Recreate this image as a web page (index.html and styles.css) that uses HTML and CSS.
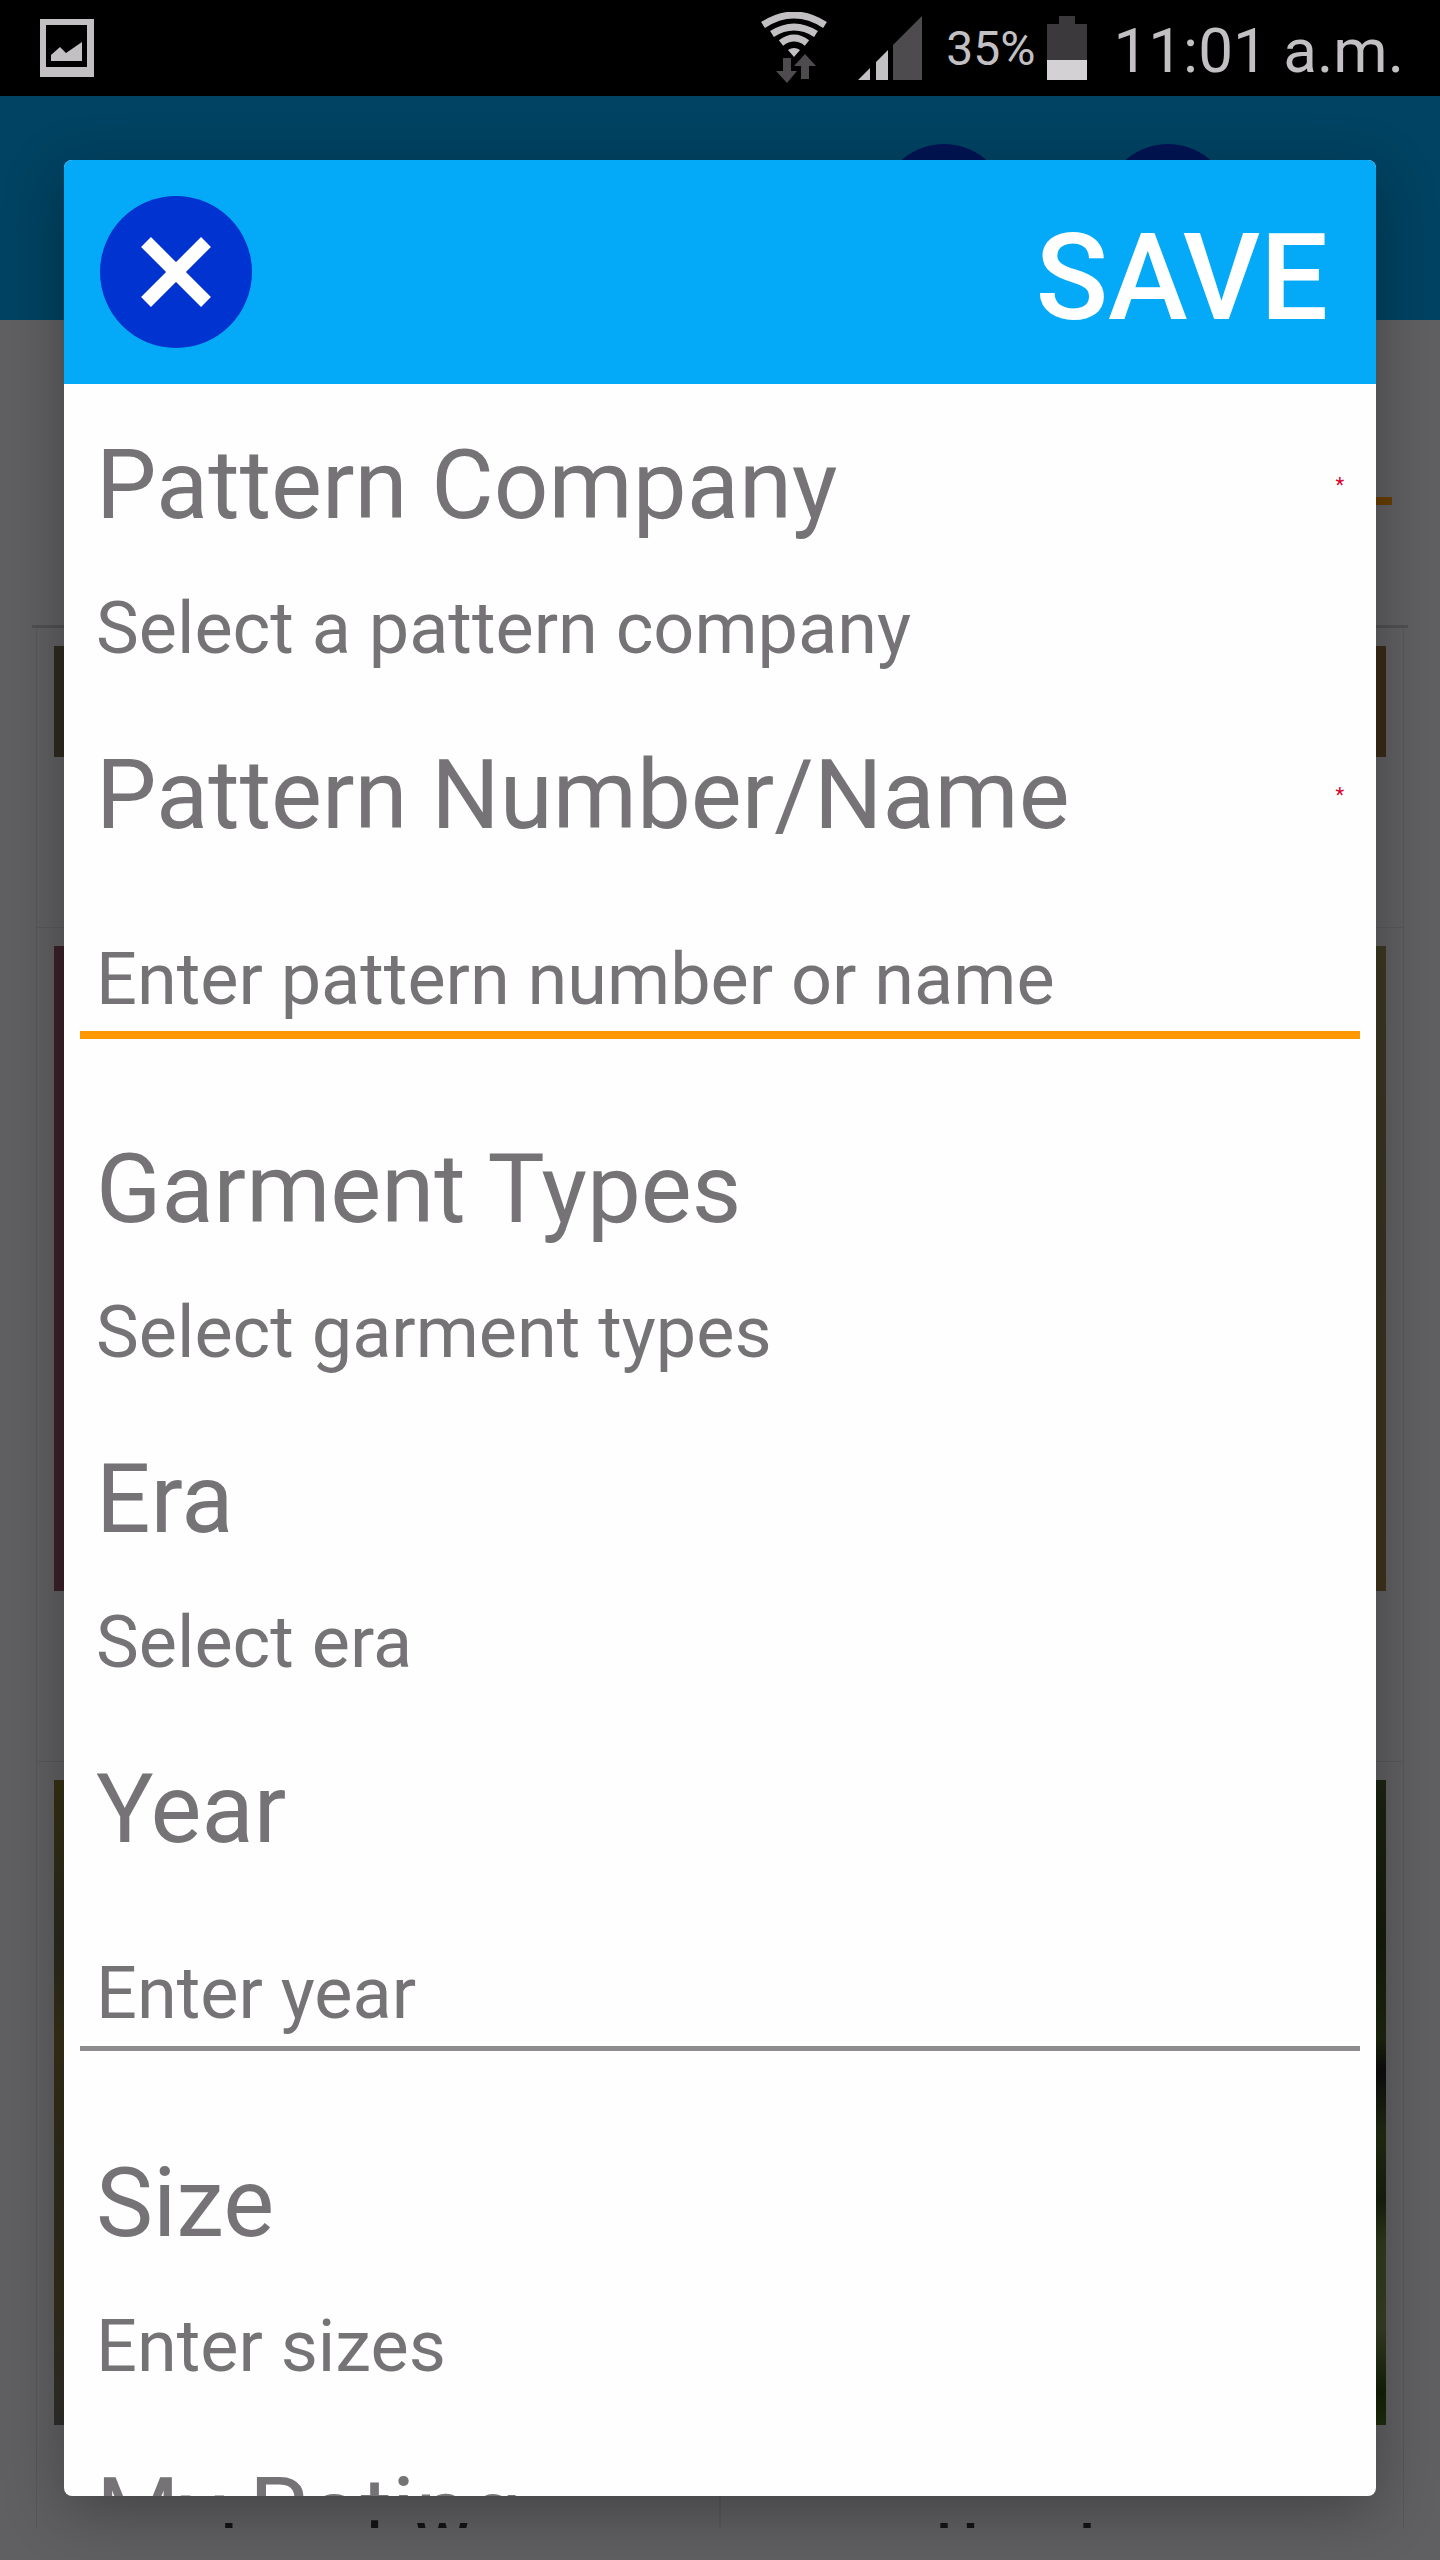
FILE: index.html
```html
<!DOCTYPE html>
<html lang="en">
<head>
    <meta charset="UTF-8">
    <meta name="viewport" content="width=device-width, initial-scale=1.0">
    <title>Add Pattern</title>
    <link rel="stylesheet" href="styles.css">
</head>
<body>
    <header class="status-bar">
        <svg class="icon-photo" width="54" height="58" viewBox="0 0 54 58">
            <path fill="#c3c0c4" fill-rule="evenodd" d="M0 0H54V58H0ZM6 6V48H47V6Z"/>
            <path fill="#c3c0c4" d="M11 42V36L20 28L26 34L42 23V42Z"/>
        </svg>
        <div class="status-right">
            <svg class="icon-wifi" width="68" height="72" viewBox="0 0 68 72">
                <g fill="none" stroke="#c3c0c4" stroke-width="7">
                    <path d="M3 13Q34 -7 65 13"/>
                    <path d="M12 22Q34 8 56 22"/>
                    <path d="M21 31Q34 21 47 31"/>
                </g>
                <path fill="#c3c0c4" d="M28 38Q34 34 40 38L34 45Z"/>
                <path fill="#4d4b4e" d="M23 46H31V59H37L27 71L16 59H23Z"/>
                <path fill="#4d4b4e" d="M45 42L56 54H49V67H41V54H34Z"/>
            </svg>
            <svg class="icon-signal" width="64" height="64" viewBox="0 0 64 64">
                <path fill="#c3c0c4" d="M0 64L12 52V64ZM18 64V46L30 34V64Z"/>
                <path fill="#4d4b4e" d="M35 64V29L64 0V64Z"/>
            </svg>
            <span class="battery-level">35%</span>
            <svg class="icon-battery" width="40" height="64" viewBox="0 0 40 64">
                <path fill="#3b393c" d="M12 0H28V8H40V44H0V8H12Z"/>
                <path fill="#d3d1d4" d="M0 44H40V64H0Z"/>
            </svg>
            <span class="clock">11:01 a.m.</span>
        </div>
    </header>

    <!-- Pattern list behind the dialog -->
    <main class="screen">
        <div class="app-bar">
            <span class="app-action"></span>
            <span class="app-action"></span>
        </div>
        <div class="search">
            <div class="search-line"></div>
        </div>
        <div class="card-list">
            <div class="card"><div class="photo olive-brown short"></div></div>
            <div class="card"><div class="photo brown short"></div></div>
            <div class="card"><div class="photo wine"></div></div>
            <div class="card"><div class="photo khaki"></div></div>
            <div class="card">
                <div class="photo leaves"></div>
                <p class="card-name">Joseph Ware</p>
            </div>
            <div class="card">
                <div class="photo garden"></div>
                <p class="card-name">Hare Ives</p>
            </div>
        </div>
    </main>

    <div class="overlay">
        <form class="dialog">
            <div class="dialog-header">
                <button type="button" class="close-btn" aria-label="Close">
                    <svg width="152" height="152" viewBox="0 0 152 152">
                        <circle cx="76" cy="76" r="76" fill="#0033cf"/>
                        <path d="M46 46L106 106M106 46L46 106" stroke="#fff" stroke-width="14"/>
                    </svg>
                </button>
                <button type="button" class="save-btn">SAVE</button>
            </div>
            <div class="dialog-body">
                <div class="field">
                    <div class="label-row">
                        <label for="company">Pattern Company</label>
                        <span class="required">*</span>
                    </div>
                    <select id="company"><option>Select a pattern company</option></select>
                </div>
                <div class="field field-line">
                    <div class="label-row">
                        <label for="name">Pattern Number/Name</label>
                        <span class="required">*</span>
                    </div>
                    <input id="name" class="active" type="text" placeholder="Enter pattern number or name">
                </div>
                <div class="field">
                    <div class="label-row"><label for="garment">Garment Types</label></div>
                    <select id="garment"><option>Select garment types</option></select>
                </div>
                <div class="field">
                    <div class="label-row"><label for="era">Era</label></div>
                    <select id="era"><option>Select era</option></select>
                </div>
                <div class="field field-line">
                    <div class="label-row"><label for="year">Year</label></div>
                    <input id="year" type="text" placeholder="Enter year">
                </div>
                <div class="field">
                    <div class="label-row"><label for="size">Size</label></div>
                    <input id="size" type="text" placeholder="Enter sizes">
                </div>
                <div class="field">
                    <div class="label-row"><span class="label">My Rating</span></div>
                </div>
            </div>
        </form>
    </div>
</body>
</html>
```
FILE: styles.css
```css
* {
    box-sizing: border-box;
}
body {
    display: flex;
    flex-direction: column;
    position: relative;
    height: 100vh;
    margin: 0;
    overflow: hidden;
    font-family: Roboto, sans-serif;
    background-color: #f0edf2;
}
button, input, select {
    font-family: inherit;
    border: none;
    background: none;
    padding: 0;
    margin: 0;
}

/* Status bar */
.status-bar {
    display: flex;
    flex: none;
    align-items: center;
    justify-content: space-between;
    height: 96px;
    padding: 0 36px 0 40px;
    background-color: #000;
    color: #c3c0c4;
}
.status-right {
    display: flex;
    align-items: center;
}
.icon-wifi {
    margin-right: 30px;
}
.icon-signal {
    margin-right: 24px;
}
.battery-level {
    font-size: 48px;
    margin-right: 12px;
}
.icon-battery {
    margin-right: 26px;
}
.clock {
    font-size: 62px;
    line-height: 88px;
    padding-top: 6px;
}

/* Screen behind */
.screen {
    display: flex;
    flex: 1;
    flex-direction: column;
    min-height: 0;
    padding-bottom: 32px;
}
.app-bar {
    display: flex;
    flex: none;
    justify-content: flex-end;
    align-items: center;
    gap: 96px;
    height: 224px;
    padding-right: 208px;
    background-color: #03a9f4;
}
.app-action {
    width: 128px;
    height: 128px;
    border-radius: 50%;
    background-color: #0033cf;
}
.search {
    flex: none;
    height: 308px;
    margin: 0 32px;
    padding: 177px 16px 0 160px;
    border-bottom: 3px solid #c8c6ca;
}
.search-line {
    height: 8px;
    background-color: #ff9800;
}
.card-list {
    display: grid;
    grid-template-columns: 1fr 1fr;
    align-content: start;
    flex: 1;
    min-height: 0;
    margin: 0 36px;
    overflow: hidden;
}
.card {
    padding: 18px 17px 0;
    border-right: 1px solid #dddbdf;
    border-left: 1px solid #dddbdf;
}
.card:nth-child(n+3) {
    border-top: 1px solid #dddbdf;
}
.photo {
    height: 645px;
    margin-bottom: 170px;
}
.photo.short {
    height: 111px;
}
.olive-brown {
    background-color: #736950;
}
.brown {
    background-color: #916c40;
}
.wine {
    background-color: #915064;
}
.khaki {
    background: linear-gradient(#988c58, #8c8055 50%, #a08045);
}
.leaves {
    margin-bottom: 88px;
    background: linear-gradient(#857a30, #6a684c 25%, #8a783c 40%, #777048 60%, #807344 80%, #77766c);
}
.garden {
    margin-bottom: 88px;
    background: linear-gradient(#4c5c30, #38481c 25%, #4c6024 40%, #222 45%, #5a7030 55%, #3c5020 65%, #7c944c 72%, #8c9c60 85%, #305010 95%, #4c7420);
}
.card-name {
    margin: 0;
    font-size: 60px;
    font-weight: 500;
    line-height: 64px;
    text-align: center;
    color: #333;
}

/* Dialog */
.overlay {
    display: flex;
    position: absolute;
    top: 96px;
    right: 0;
    bottom: 0;
    left: 0;
    padding: 64px;
    background-color: rgba(0,0,0,0.6);
}
.dialog {
    display: flex;
    flex: 1;
    flex-direction: column;
    overflow: hidden;
    border-radius: 8px;
    background-color: #fefefe;
    box-shadow: 0 16px 60px rgba(0,0,0,0.3);
}
.dialog-header {
    display: flex;
    flex: none;
    align-items: center;
    justify-content: space-between;
    height: 224px;
    padding: 0 48px 0 36px;
    background-color: #04a9f8;
}
.close-btn svg {
    display: block;
}
.save-btn {
    font-size: 120px;
    font-weight: 500;
    line-height: 144px;
    padding-top: 12px;
    color: #fff;
}
.dialog-body {
    flex: 1;
    min-height: 0;
    padding: 45px 16px 0;
    overflow: hidden;
    color: #757376;
}
.field {
    display: flex;
    flex-direction: column;
    gap: 46px;
    padding-bottom: 68px;
}
.label-row {
    display: flex;
    align-items: center;
    justify-content: space-between;
    padding: 0 16px;
    font-size: 96px;
    line-height: 112px;
}
.required {
    font-size: 20px;
    line-height: 24px;
    color: #d8002c;
}
.field select,
.field input {
    width: 100%;
    height: 84px;
    padding: 0 16px;
    font-size: 72px;
    line-height: 84px;
    color: #757376;
    appearance: none;
    outline: none;
}
.field input::placeholder {
    color: #757376;
    opacity: 1;
}
.field-line {
    gap: 86px;
    padding-bottom: 94px;
}
.field-line input {
    height: 100px;
    margin-bottom: 2px;
    padding-bottom: 11px;
    border-bottom: 5px solid #8e8c8f;
}
.field-line .active {
    height: 102px;
    margin-bottom: 0;
    padding-bottom: 10px;
    border-bottom: 8px solid #ff9800;
}
```
